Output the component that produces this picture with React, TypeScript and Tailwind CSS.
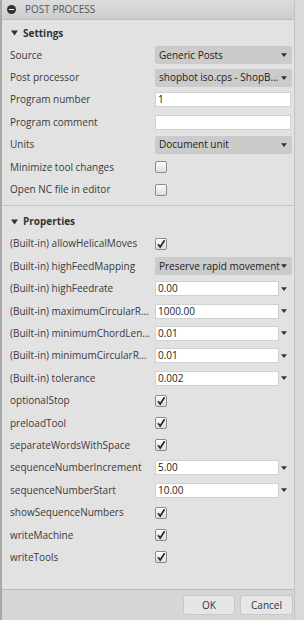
import React from "react";

const font = { fontFamily: '"Open Sans", "DejaVu Sans", sans-serif' };

const Arrow = () => (
  <svg width="6" height="4" viewBox="0 0 6 4" className="shrink-0">
    <path d="M0 0.3 L6 0.3 L3 4 Z" fill="#333" />
  </svg>
);

const Check = ({ on }: { on: boolean }) => (
  <div className="flex h-[12px] w-[12px] items-center justify-center rounded-[2px] border border-[#8a8a8a] bg-gradient-to-b from-[#fdfdfd] to-[#dcdcdc] shadow-[inset_0_1px_0_#fff]">
    {on && (
      <svg width="10" height="10" viewBox="0 0 10 10">
        <path d="M2 5.2 L4.2 8 L8.6 1.2" fill="none" stroke="#222" strokeWidth="1.6" />
      </svg>
    )}
  </div>
);

const Select = ({ value }: { value: string }) => (
  <div className="flex h-[18px] w-[137px] items-center justify-between rounded-[2px] bg-[#cbcbcb] pl-[4px] pr-[5px] text-[10px] text-[#222]">
    <span className="truncate">{value}</span>
    <Arrow />
  </div>
);

const Input = ({ value }: { value: string }) => (
  <div className="flex h-[15px] w-[136px] items-center border border-[#d0d0d0] bg-white pl-[2px] text-[10px] text-[#222]">
    {value}
  </div>
);

const Combo = ({ value }: { value: string }) => (
  <div className="flex w-[137px] items-center justify-between">
    <div className="flex h-[15px] w-[124px] items-center border border-[#d0d0d0] bg-white pl-[2px] text-[10px] text-[#222]">
      {value}
    </div>
    <div className="pr-[5px]">
      <Arrow />
    </div>
  </div>
);

type Ctl =
  | { kind: "select"; value: string }
  | { kind: "input"; value: string }
  | { kind: "combo"; value: string }
  | { kind: "check"; on: boolean };

const Row = ({ label, ctl }: { label: string; ctl: Ctl }) => (
  <div className="flex h-[22.4px] items-center">
    <div className="w-[153px] shrink-0 pl-[8px] pr-[4px]">
      <div className="truncate text-[10px] text-[#3a3a3a]">{label}</div>
    </div>
    <div className="flex-1">
      {ctl.kind === "select" && <Select value={ctl.value} />}
      {ctl.kind === "input" && <Input value={ctl.value} />}
      {ctl.kind === "combo" && <Combo value={ctl.value} />}
      {ctl.kind === "check" && <Check on={ctl.on} />}
    </div>
  </div>
);

const SectionHead = ({ title }: { title: string }) => (
  <div className="flex h-[22px] items-center gap-[5px] pl-[9px] text-[10px] font-bold text-[#333]">
    <svg width="7" height="6" viewBox="0 0 7 6">
      <path d="M0 0.5 L7 0.5 L3.5 5.5 Z" fill="#333" />
    </svg>
    {title}
  </div>
);

const settings: [string, Ctl][] = [
  ["Source", { kind: "select", value: "Generic Posts" }],
  ["Post processor", { kind: "select", value: "shopbot iso.cps - ShopBot..." }],
  ["Program number", { kind: "input", value: "1" }],
  ["Program comment", { kind: "input", value: "" }],
  ["Units", { kind: "select", value: "Document unit" }],
  ["Minimize tool changes", { kind: "check", on: false }],
  ["Open NC file in editor", { kind: "check", on: false }],
];

const properties: [string, Ctl][] = [
  ["(Built-in) allowHelicalMoves", { kind: "check", on: true }],
  ["(Built-in) highFeedMapping", { kind: "select", value: "Preserve rapid movement" }],
  ["(Built-in) highFeedrate", { kind: "combo", value: "0.00" }],
  ["(Built-in) maximumCircularRadius", { kind: "combo", value: "1000.00" }],
  ["(Built-in) minimumChordLength", { kind: "combo", value: "0.01" }],
  ["(Built-in) minimumCircularRadius", { kind: "combo", value: "0.01" }],
  ["(Built-in) tolerance", { kind: "combo", value: "0.002" }],
  ["optionalStop", { kind: "check", on: true }],
  ["preloadTool", { kind: "check", on: true }],
  ["separateWordsWithSpace", { kind: "check", on: true }],
  ["sequenceNumberIncrement", { kind: "combo", value: "5.00" }],
  ["sequenceNumberStart", { kind: "combo", value: "10.00" }],
  ["showSequenceNumbers", { kind: "check", on: true }],
  ["writeMachine", { kind: "check", on: true }],
  ["writeTools", { kind: "check", on: true }],
];

export default function App() {
  return (
    <div style={font} className="flex h-[620px] w-[304px] overflow-hidden bg-[#d9d9d9]">
      <div className="flex w-[295px] flex-col border-l-[2px] border-r border-l-[#a9a9a9] border-r-[#c4c4c4] bg-[#e2e2e2]">
        <div className="flex h-[20px] shrink-0 items-center gap-[9px] border-b border-[#bdbdbd] bg-gradient-to-b from-[#dcdcdc] to-[#cdcdcd] pl-[5px] text-[10px] text-[#555]">
          <div className="flex h-[9px] w-[9px] items-center justify-center rounded-full bg-[#333]">
            <div className="h-[1.5px] w-[5px] bg-white" />
          </div>
          <span>POST PROCESS</span>
        </div>
        <div className="flex flex-1 flex-col pt-[2px]">
          <SectionHead title="Settings" />
          {settings.map(([l, c]) => (
            <Row key={l} label={l} ctl={c} />
          ))}
          <div className="mt-[4px] mb-[5px] h-[1px] bg-[#c6c6c6]" />
          <SectionHead title="Properties" />
          {properties.map(([l, c]) => (
            <Row key={l} label={l} ctl={c} />
          ))}
        </div>
        <div className="flex h-[31px] shrink-0 items-center justify-end gap-[7px] border-t border-[#bcbcbc] bg-[#d6d6d6] pr-[2px]">
          <div className="flex h-[18px] w-[50px] items-center justify-center rounded-[2px] bg-[#e6e6e6] text-[10px] text-[#333] shadow-[0_0_0_1px_#c8c8c8]">
            OK
          </div>
          <div className="flex h-[18px] w-[51px] items-center justify-center rounded-[2px] bg-[#e6e6e6] text-[10px] text-[#333] shadow-[0_0_0_1px_#c8c8c8]">
            Cancel
          </div>
        </div>
      </div>
    </div>
  );
}
